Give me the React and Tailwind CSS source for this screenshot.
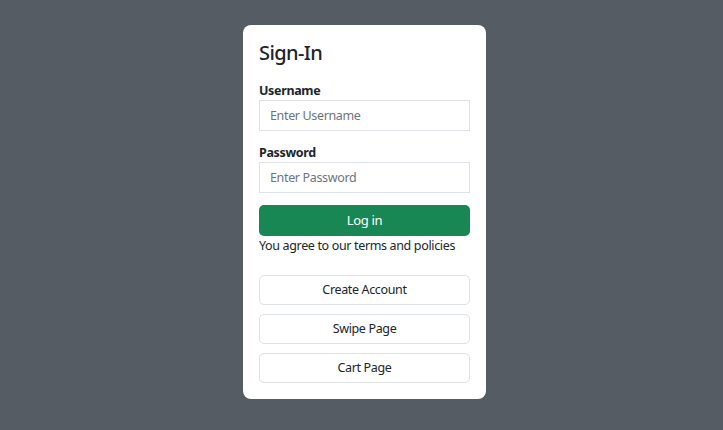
export default function App() {
  const links = ["Create Account", "Swipe Page", "Cart Page"];

  return (
    <div
      className="min-h-[430px] w-full bg-[#565c63] flex justify-center items-start pt-[25px] pl-[6px]"
      style={{ fontFamily: '"Noto Sans", "Open Sans", sans-serif' }}
    >
      <div className="w-[243px] bg-white rounded-lg px-4 pt-4 pb-4 text-[#212529] tracking-[-0.35px]">
        <h2 className="text-[20px] leading-[24px] font-medium tracking-[-0.6px] mb-[17px]">Sign-In</h2>

        <form onSubmit={(e) => e.preventDefault()}>
          <label className="block text-[12.5px] leading-[18px] font-bold">Username</label>
          <input
            type="text"
            placeholder="Enter Username"
            className="block w-full h-[31px] border border-[#dee2e6] px-[10px] text-[12.5px] tracking-[-0.35px] placeholder:text-[#6c757d] outline-none"
          />

          <label className="block mt-[13px] text-[12.5px] leading-[18px] font-bold">Password</label>
          <input
            type="password"
            placeholder="Enter Password"
            className="block w-full h-[31px] border border-[#dee2e6] px-[10px] text-[12.5px] tracking-[-0.35px] placeholder:text-[#6c757d] outline-none"
          />

          <button
            type="submit"
            className="block w-full h-[31px] mt-3 rounded-[5px] bg-[#198754] text-white text-[13px] tracking-[-0.35px]"
          >
            Log in
          </button>
          <p className="text-[12.5px] leading-[18px] mt-px whitespace-nowrap">You agree to our terms and policies</p>

          <div className="flex flex-col gap-[9px] mt-5">
            {links.map((l) => (
              <button
                key={l}
                type="button"
                className="w-full h-[30px] border border-[#dee2e6] rounded-[5px] bg-white text-[12.5px] tracking-[-0.35px] text-[#212529]"
              >
                {l}
              </button>
            ))}
          </div>
        </form>
      </div>
    </div>
  );
}
